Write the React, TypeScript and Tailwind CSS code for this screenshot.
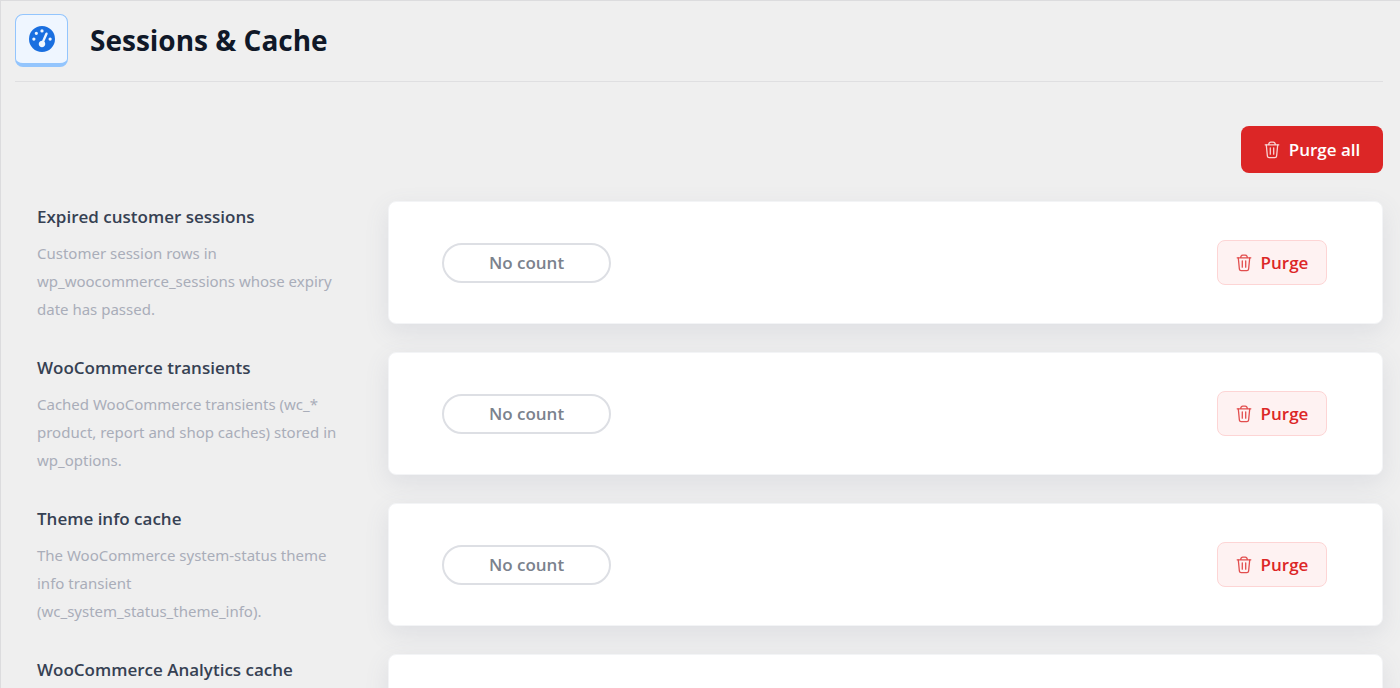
import React from "react";
import { FaGaugeHigh } from "react-icons/fa6";

const caches = [
  {
    title: "Expired customer sessions",
    text: "Customer session rows in wp_woocommerce_sessions whose expiry date has passed.",
  },
  {
    title: "WooCommerce transients",
    text: "Cached WooCommerce transients (wc_* product, report and shop caches) stored in wp_options.",
  },
  {
    title: "Theme info cache",
    text: "The WooCommerce system-status theme info transient (wc_system_status_theme_info).",
  },
  {
    title: "WooCommerce Analytics cache",
    text: "",
  },
];

const TrashIcon = () => (
  <svg
    viewBox="0 0 16 18"
    fill="none"
    stroke="currentColor"
    strokeWidth="1.3"
    strokeLinecap="round"
    strokeLinejoin="round"
    className="h-[18px] w-4 shrink-0 opacity-80"
    aria-hidden="true"
  >
    <path d="M1.200 3.800h13.600M4.600 3.600Q5 1.200 6.800 1.200h2.400Q11 1.200 11.400 3.600" />
    <path d="M2.300 4l1.100 11.200Q3.600 16.600 5.100 16.600h5.800q1.500 0 1.700-1.400L13.700 4" />
    <path d="M6.300 6.800v6.400M9.700 6.800v6.400" />
  </svg>
);

const CacheRow = ({ title, text }: { title: string; text: string }) => {
  return (
    <section className="flex">
      <div className="w-[373px] shrink-0 pl-[22px] pr-10 pt-[2px]">
        <h2 className="text-[17px] leading-7 font-semibold text-gray-700">
          {title}
        </h2>
        <p className="mt-2 font-['Noto_Sans',sans-serif] text-[15px] leading-7 text-[#a9adb9]">
          {text}
        </p>
      </div>
      <div className="flex h-[123px] flex-1 items-center justify-between rounded-lg border border-gray-100 bg-white pl-[53px] pr-[55px] shadow-[0_8px_24px_rgba(100,110,140,0.12)]">
        {text && (
          <>
            <span className="flex h-10 w-[169px] items-center justify-center rounded-full border-2 border-[#dddfe4] text-[17px] font-semibold text-[#7b828d]">
              No count
            </span>
            <button
              type="button"
              className="flex h-[45px] w-[110px] items-center justify-center gap-[9px] rounded-lg border border-[#fdd5d5] bg-[#fef2f2] text-[17px] font-semibold text-[#dc2626]"
            >
              <TrashIcon />
              Purge
            </button>
          </>
        )}
      </div>
    </section>
  );
};

const App = () => {
  return (
    <div className="h-screen overflow-x-hidden overflow-y-hidden border-l border-t border-[#dcdcde] bg-[#efefef] pl-[14px] pr-[17px] font-['Open_Sans',sans-serif]">
      <header className="flex h-[81px] items-center gap-[22px] border-b border-[#dfdfe1] pb-[2px]">
        <div className="flex h-[53px] w-[53px] items-center justify-center rounded-lg border border-b-4 border-[#93c5fd] bg-[#eff6ff]">
          <FaGaugeHigh className="h-[26px] w-[26px] text-[#1a6fe0]" />
        </div>
        <h1 className="text-[28px] leading-9 font-bold text-gray-900">
          Sessions &amp; Cache
        </h1>
      </header>
      <div className="mt-11 flex justify-end">
        <button
          type="button"
          className="flex h-[47px] w-[142px] items-center justify-center gap-[9px] rounded-lg bg-[#dc2626] text-[17px] font-semibold text-white"
        >
          <TrashIcon />
          Purge all
        </button>
      </div>
      <main className="mt-7 flex flex-col gap-7">
        {caches.map((cache) => (
          <CacheRow key={cache.title} title={cache.title} text={cache.text} />
        ))}
      </main>
    </div>
  );
};

export default App;
